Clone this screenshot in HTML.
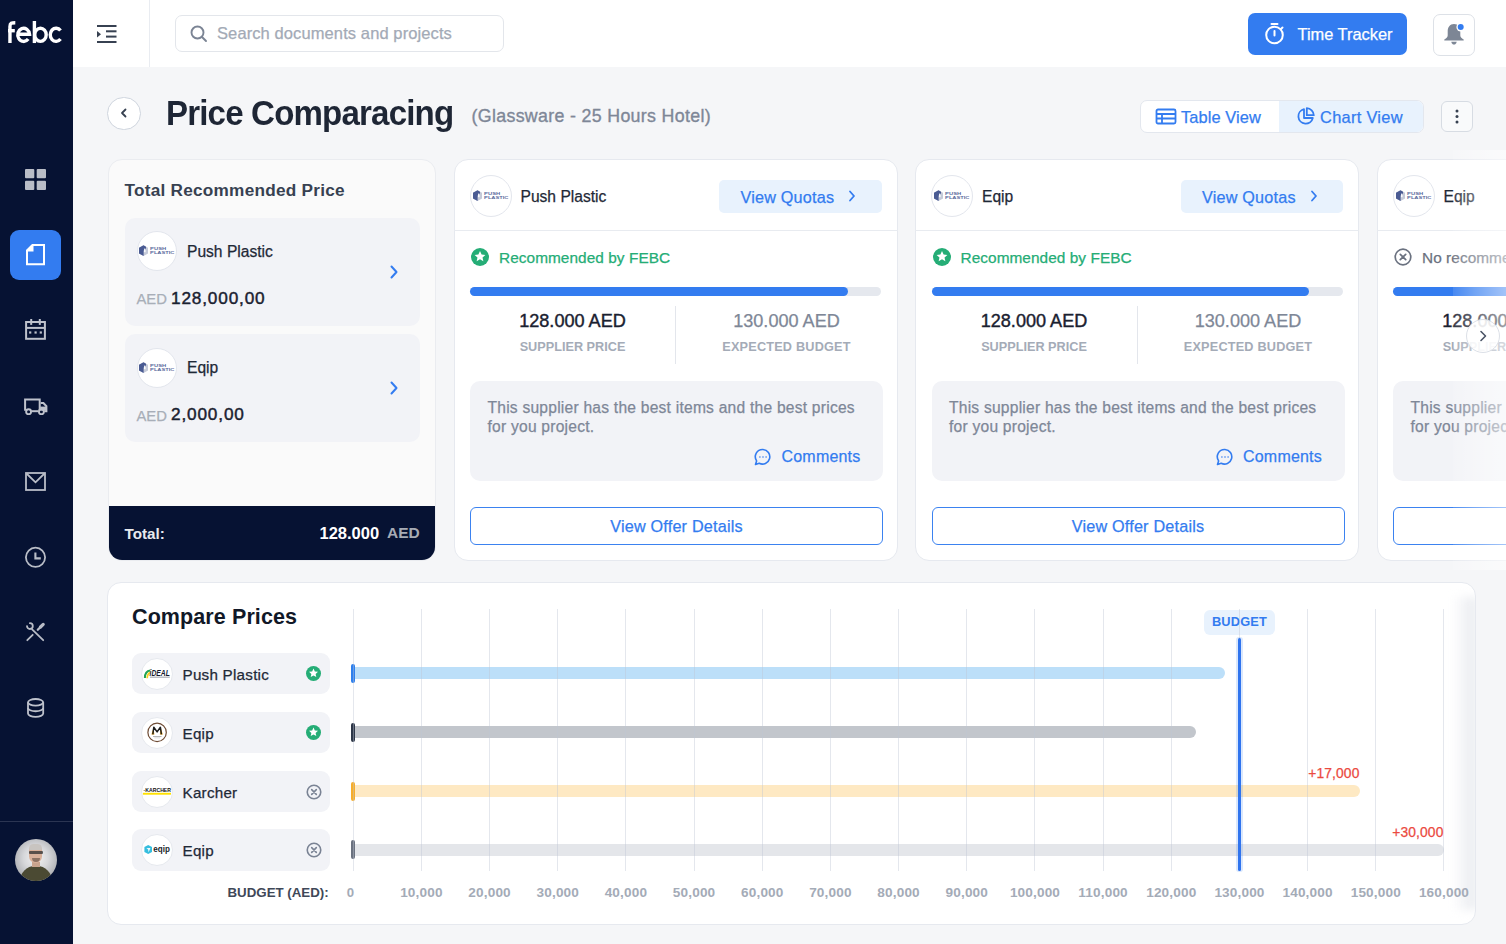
<!DOCTYPE html>
<html><head><meta charset="utf-8">
<style>
*{box-sizing:border-box;margin:0;padding:0}
html,body{width:1506px;height:944px;overflow:hidden;background:#F5F6F8;font-family:"Liberation Sans",sans-serif;color:#1F2937}
.abs{position:absolute}
#sidebar{position:absolute;left:0;top:0;width:73px;height:944px;background:#061233}
#header{position:absolute;left:73px;top:0;width:1433px;height:67px;background:#fff}
.t{position:absolute;white-space:nowrap;line-height:1;-webkit-text-stroke-width:0.25px}
.t[style*="bold"]{-webkit-text-stroke-width:0}
.card{position:absolute;top:158.5px;height:402px;border:1px solid #E6E9EF;border-radius:14px;background:#fff;overflow:hidden}
.logo{position:absolute;border-radius:50%;background:#fff;border:1px solid #E3E6ED;overflow:hidden}
.item{position:absolute;left:16px;width:295.5px;height:108px;border-radius:10px;background:#F2F3F7}

</style></head>
<body>
<!-- SIDEBAR -->
<div id="sidebar">
  <svg class="abs" id="logo" style="left:0;top:0" width="73" height="60" viewBox="0 0 73 60" fill="none" stroke="#fff" stroke-width="3.4"><path d="M9.95 43.05 V26.5 C9.95 23 11.6 22.7 15.3 22.7"/><path d="M8 30.7 H14.8"/><path d="M17.8 34.3 H29.55 A5.9 6.6 0 1 0 28.2 39.05"/><path d="M34.4 21 V43.05"/><ellipse cx="40.45" cy="34.8" rx="5.75" ry="6.6"/><path d="M60.5 30.55 A5.8 6.6 0 1 0 60.5 39.05"/></svg>
  <!-- grid -->
  <svg class="abs" style="left:25px;top:169px" width="21" height="21" viewBox="0 0 21 21"><g fill="#B9BDC7"><rect x="0" y="0" width="9.3" height="9.3" rx="1"/><rect x="11.7" y="0" width="9.3" height="9.3" rx="1"/><rect x="0" y="11.7" width="9.3" height="9.3" rx="1"/><rect x="11.7" y="11.7" width="9.3" height="9.3" rx="1"/></g></svg>
  <!-- active doc -->
  <div class="abs" style="left:10px;top:229.5px;width:51px;height:50.5px;border-radius:9px;background:#337CF0"></div>
  <svg class="abs" style="left:25px;top:243px" width="22" height="24" viewBox="0 0 22 24"><path d="M2 7.5 L7.5 2 H19 V21.3 H2 Z" fill="none" stroke="#fff" stroke-width="2"/><path d="M1.5 7 L7 1.5 H8.5 V8.5 H1.5 Z" fill="#fff"/></svg>
  <!-- calendar -->
  <svg class="abs" style="left:24px;top:318px" width="23" height="23" viewBox="0 0 23 23" fill="none" stroke="#BEC2CC" stroke-width="2"><rect x="2.1" y="4" width="18.8" height="16.8"/><line x1="2.1" y1="9.9" x2="20.9" y2="9.9"/><line x1="7.2" y1="1" x2="7.2" y2="6.9"/><line x1="15.8" y1="1" x2="15.8" y2="6.9"/><g fill="#BEC2CC" stroke="none"><rect x="5.1" y="13.4" width="2.2" height="2.2"/><rect x="10.5" y="13.4" width="2.2" height="2.2"/><rect x="15.7" y="13.4" width="2.2" height="2.2"/></g></svg>
  <!-- truck -->
  <svg class="abs" style="left:23px;top:397px" width="26" height="20" viewBox="0 0 26 20" fill="none" stroke="#BEC2CC" stroke-width="2"><path d="M2.1 13.8 V2.5 H16.7 V13"/><path d="M8.2 14.2 H15.6"/><path d="M17.7 6 H20.4 L23.4 9.2 V14.2 H21.2"/><path d="M17.2 9.6 H23.6 V13.6 H17.2 Z" fill="#BEC2CC" stroke="none"/><circle cx="5.6" cy="14.7" r="2.45" stroke-width="1.9"/><circle cx="18.4" cy="14.7" r="2.45" stroke-width="1.9"/></svg>
  <!-- mail -->
  <svg class="abs" style="left:24px;top:471px" width="23" height="21" viewBox="0 0 23 21" fill="none" stroke="#B9BDC7" stroke-width="1.8"><rect x="2" y="2" width="19" height="17"/><path d="M2.5 2.5 L11.5 11.3 L20.5 2.5"/></svg>
  <!-- clock -->
  <svg class="abs" style="left:24px;top:545.5px" width="23" height="23" viewBox="0 0 23 23" fill="none" stroke="#B9BDC7" stroke-width="1.8"><circle cx="11.5" cy="11.3" r="9.6"/><path d="M11.4 6.4 V12.4 H16.8" stroke-width="2.1"/></svg>
  <!-- tools -->
  <svg class="abs" style="left:20px;top:617px" width="30" height="30" viewBox="0 0 30 30" fill="none" stroke="#B9BDC7" stroke-width="1.8" stroke-linecap="round"><path d="M9.9 6.2 A2.9 2.9 0 1 1 7.0 9.1"/><path d="M12.1 12.3 L23.2 23.2"/><path d="M12.7 17.8 L7.3 23.2"/><path d="M17.8 12.7 L20.5 10" stroke-width="2.3"/><path d="M20.5 10 L23.2 7.4" stroke-width="3.2"/></svg>
  <!-- db -->
  <svg class="abs" style="left:26px;top:697px" width="19" height="22" viewBox="0 0 19 22" fill="none" stroke="#BEC2CC" stroke-width="1.8"><ellipse cx="9.6" cy="5.3" rx="7.6" ry="3.3"/><path d="M2 5.3 V16.6 A7.6 3.3 0 0 0 17.2 16.6 V5.3"/><path d="M2 10.95 A7.6 3.3 0 0 0 17.2 10.95"/></svg>
  <div class="abs" style="left:0;top:821px;width:73px;height:1px;background:#2B3552"></div>
  <div class="abs" id="avatar" style="left:14.5px;top:839px;width:42px;height:42px;border-radius:50%;overflow:hidden;background:radial-gradient(circle at 50% 45%,#F4F4F4 0,#D6D7DA 40%,#8E9196 100%)">
    <div class="abs" style="left:5px;top:27px;width:32px;height:20px;border-radius:15px 15px 0 0;background:#4B4A33"></div>
    <div class="abs" style="left:17px;top:23px;width:8px;height:5px;background:#C9A48E"></div>
    <div class="abs" style="left:14.5px;top:6px;width:13px;height:18px;border-radius:6px 6px 7px 7px;background:#D8B09A"></div>
    <div class="abs" style="left:14.5px;top:5px;width:13px;height:6px;border-radius:6px 6px 2px 2px;background:#C8C4C0"></div>
    <div class="abs" style="left:14px;top:12px;width:14px;height:3px;border-radius:1px;background:#2F2F2F;opacity:.75"></div>
    <div class="abs" style="left:17px;top:19px;width:8px;height:4px;border-radius:0 0 4px 4px;background:#5A4A40;opacity:.6"></div>
  </div>
</div>

<!-- HEADER -->
<div id="header">
  <svg class="abs" style="left:24px;top:25px" width="20" height="18" viewBox="0 0 20 18"><g fill="#374151"><rect x="0" y="0" width="19.5" height="2"/><rect x="9" y="5.3" width="10.5" height="2"/><rect x="9" y="10.6" width="10.5" height="2"/><rect x="0" y="16" width="19.5" height="2"/><path d="M0 5.9 L4 9.2 L0 12.5 Z"/></g></svg>
  <div class="abs" style="left:76px;top:0;width:1px;height:67px;background:#E9ECF1"></div>
  <div class="abs" style="left:102px;top:15px;width:329px;height:37px;border:1px solid #E3E6EB;border-radius:7px;background:#fff"></div>
  <svg class="abs" style="left:116.7px;top:25px" width="18" height="18" viewBox="0 0 18 18" fill="none" stroke="#7B8494" stroke-width="1.9" stroke-linecap="round"><circle cx="7.5" cy="7.5" r="6"/><path d="M12 12 L16 16"/></svg>
  <div class="t" style="left:144px;top:24.5px;font-size:16.5px;color:#A3AAB6;letter-spacing:0.1px">Search documents and projects</div>
  <div class="abs" style="left:1175px;top:13.2px;width:159px;height:42px;border-radius:7px;background:#337CF0"></div>
  <svg class="abs" style="left:1191px;top:22px" width="22" height="23" viewBox="0 0 22 23" fill="none" stroke="#fff" stroke-width="2" stroke-linecap="round"><circle cx="10.5" cy="13" r="8.3"/><path d="M10.5 9 V13.5"/><path d="M7.5 2 H13.5"/><path d="M18.5 5.5 L17 7"/></svg>
  <div class="t" style="left:1224.5px;top:26px;font-size:16.4px;color:#fff">Time Tracker</div>
  <div class="abs" style="left:1360px;top:13.5px;width:42px;height:42px;border:1px solid #DDE1E7;border-radius:7px;background:#fff"></div>
  <svg class="abs" style="left:1370px;top:22px" width="22" height="24" viewBox="0 0 22 24"><path fill="#7D8695" d="M11 2 C6.8 2 4.7 5.3 4.7 9.3 V13.3 C4.7 14.9 3.7 16.1 1.3 17.5 V18.4 H20.7 V17.5 C18.3 16.1 17.3 14.9 17.3 13.3 V9.3 C17.3 5.3 15.2 2 11 2 Z"/><path fill="#7D8695" d="M8.3 19.7 H13.7 C13.4 21.5 12.4 22.6 11 22.6 C9.6 22.6 8.6 21.5 8.3 19.7 Z"/><circle cx="17.7" cy="5.1" r="4.3" fill="#fff"/><circle cx="17.7" cy="5.1" r="3" fill="#337CF0"/></svg>
</div>

<!-- TITLE ROW -->
<div class="abs" style="left:107px;top:96.5px;width:33.5px;height:33.5px;border:1px solid #CFD5DE;border-radius:50%;background:#fff"></div>
<svg class="abs" style="left:117px;top:106px" width="14" height="14" viewBox="0 0 14 14" fill="none" stroke="#374151" stroke-width="1.8" stroke-linecap="round" stroke-linejoin="round"><path d="M8.5 3.5 L5 7 L8.5 10.5"/></svg>
<div class="t" style="left:166px;top:95.8px;font-size:35.5px;font-weight:bold;color:#1E2635;letter-spacing:-0.9px;transform:scaleX(0.932);transform-origin:0 0">Price Comparacing</div>
<div class="t" style="left:471.5px;top:107.9px;font-size:17.8px;color:#7E8797;letter-spacing:0.33px;-webkit-text-stroke:0.35px #7E8797">(Glassware - 25 Hours Hotel)</div>
<!-- toggle -->
<div class="abs" style="left:1139.5px;top:100px;width:284px;height:32.5px;border:1px solid #E3E7EE;border-radius:7px;background:#fff;overflow:hidden">
  <div class="abs" style="left:138px;top:0;width:146px;height:32px;background:#E8F2FD"></div>
</div>
<svg class="abs" style="left:1155px;top:108px" width="22" height="17" viewBox="0 0 22 17" fill="none" stroke="#337CF0" stroke-width="1.8"><rect x="1.5" y="1.5" width="19" height="14" rx="1.5"/><path d="M1.5 6 H20.5 M1.5 10.5 H20.5 M7 6 V15.5"/></svg>
<div class="t" style="left:1181px;top:108.5px;font-size:16.4px;color:#337CF0;letter-spacing:0.1px">Table View</div>
<svg class="abs" style="left:1296px;top:107px" width="19" height="19" viewBox="0 0 19 19" fill="none" stroke="#337CF0" stroke-width="1.8" stroke-linejoin="round"><path d="M8 2.2 A7.3 7.3 0 1 0 16.8 11 H8 Z"/><path d="M10.8 1.2 A7.3 7.3 0 0 1 17.8 8.2 H10.8 Z"/></svg>
<div class="t" style="left:1320px;top:108.5px;font-size:16.4px;color:#337CF0;letter-spacing:0.3px">Chart View</div>
<div class="abs" style="left:1441px;top:101px;width:31.5px;height:31px;border:1px solid #D7DCE3;border-radius:6px;background:#F9FAFB"></div>
<svg class="abs" style="left:1454px;top:108px" width="6" height="17" viewBox="0 0 6 17" fill="#374151"><circle cx="3" cy="3" r="1.5"/><circle cx="3" cy="8.5" r="1.5"/><circle cx="3" cy="14" r="1.5"/></svg>

<!-- CARD 1 -->
<div class="card" style="left:107.5px;width:328px;background:#FAFAFA;border-color:#EAECF0">
  <div class="t" style="left:16px;top:22px;font-size:17.2px;font-weight:bold;color:#374151;letter-spacing:0.25px">Total Recommended Price</div>
  <div class="item" style="top:58px"></div>
  <div class="item" style="top:174.5px"></div>
  <div class="abs" style="left:0;top:346.5px;width:328px;height:56px;background:#061233"></div>
  <div class="t" style="left:16px;top:366px;font-size:15.2px;font-weight:bold;color:#E8EAEE">Total:</div>
  <div class="t" style="left:211px;top:365px;font-size:16.5px;font-weight:bold;color:#fff">128.000</div>
  <div class="t" style="left:278.5px;top:365.5px;font-size:15.5px;font-weight:bold;color:#A6ABB5">AED</div>
</div>
<div class="logo" style="left:137.0px;top:231.0px;width:40px;height:40px"></div><svg class="abs" style="left:137.0px;top:243.0px" width="40" height="16" viewBox="0 0 40 16"><path d="M6.5 2.3 L11 4.8 V10.5 L6.5 13 L2 10.5 V4.8 Z" fill="#C5CAD8"/><path d="M2 4.8 L6.5 2.3 L9 3.7 V6.2 L6.6 7.4 V12.9 L2 10.5 Z" fill="#4A5B93"/><rect x="7.1" y="5.6" width="1.4" height="3.6" fill="#fff"/><text x="13.1" y="6.7" font-family="Liberation Sans" font-size="3.4" font-weight="bold" fill="#5A6A9C" textLength="16.1" lengthAdjust="spacingAndGlyphs">PUSH</text><text x="13.1" y="11.2" font-family="Liberation Sans" font-size="4.4" font-weight="bold" fill="#5A6A9C" textLength="24.4" lengthAdjust="spacingAndGlyphs">PLASTIC</text></svg><div class="t" style="left:187px;top:243.5px;font-size:15.6px;color:#1F2937">Push Plastic</div><svg class="abs" style="left:388px;top:264.5px" width="12" height="14" viewBox="0 0 12 14" fill="none" stroke="#337CF0" stroke-width="2" stroke-linecap="round" stroke-linejoin="round"><path d="M3.5 1.5 L8.5 7 L3.5 12.5"/></svg><div class="t" style="left:136.5px;top:292.2px;font-size:14.8px;color:#A8AEB8;-webkit-text-stroke:0.25px #A8AEB8">AED</div><div class="t" style="left:171px;top:289.9px;font-size:17.2px;color:#1A2130;letter-spacing:0.85px;-webkit-text-stroke:0.45px #1A2130">128,000,00</div><div class="logo" style="left:137.0px;top:347.5px;width:40px;height:40px"></div><svg class="abs" style="left:137.0px;top:359.5px" width="40" height="16" viewBox="0 0 40 16"><path d="M6.5 2.3 L11 4.8 V10.5 L6.5 13 L2 10.5 V4.8 Z" fill="#C5CAD8"/><path d="M2 4.8 L6.5 2.3 L9 3.7 V6.2 L6.6 7.4 V12.9 L2 10.5 Z" fill="#4A5B93"/><rect x="7.1" y="5.6" width="1.4" height="3.6" fill="#fff"/><text x="13.1" y="6.7" font-family="Liberation Sans" font-size="3.4" font-weight="bold" fill="#5A6A9C" textLength="16.1" lengthAdjust="spacingAndGlyphs">PUSH</text><text x="13.1" y="11.2" font-family="Liberation Sans" font-size="4.4" font-weight="bold" fill="#5A6A9C" textLength="24.4" lengthAdjust="spacingAndGlyphs">PLASTIC</text></svg><div class="t" style="left:187px;top:360.0px;font-size:15.6px;color:#1F2937">Eqip</div><svg class="abs" style="left:388px;top:381.0px" width="12" height="14" viewBox="0 0 12 14" fill="none" stroke="#337CF0" stroke-width="2" stroke-linecap="round" stroke-linejoin="round"><path d="M3.5 1.5 L8.5 7 L3.5 12.5"/></svg><div class="t" style="left:136.5px;top:408.7px;font-size:14.8px;color:#A8AEB8;-webkit-text-stroke:0.25px #A8AEB8">AED</div><div class="t" style="left:171px;top:406.4px;font-size:17.2px;color:#1A2130;letter-spacing:0.85px;-webkit-text-stroke:0.45px #1A2130">2,000,00</div><!-- COMPARE -->
<div class="abs" style="left:107px;top:582px;width:1368.5px;height:343px;border:1px solid #E6E9EF;border-radius:14px;background:#fff;overflow:hidden"><div class="abs" style="right:-4px;top:14px;width:26px;bottom:14px;background:linear-gradient(90deg,rgba(234,236,240,0),rgba(234,236,240,1) 75%,rgba(245,246,248,1));filter:blur(5px)"></div></div><div class="t" style="left:132px;top:607px;font-size:21.5px;font-weight:bold;color:#111827;letter-spacing:0.1px">Compare Prices</div><div class="abs" style="left:352.75px;top:609px;width:1px;height:261.5px;background:rgba(190,197,212,.42);z-index:1"></div><div class="abs" style="left:420.92px;top:609px;width:1px;height:261.5px;background:rgba(190,197,212,.42);z-index:1"></div><div class="abs" style="left:489.09px;top:609px;width:1px;height:261.5px;background:rgba(190,197,212,.42);z-index:1"></div><div class="abs" style="left:557.26px;top:609px;width:1px;height:261.5px;background:rgba(190,197,212,.42);z-index:1"></div><div class="abs" style="left:625.43px;top:609px;width:1px;height:261.5px;background:rgba(190,197,212,.42);z-index:1"></div><div class="abs" style="left:693.60px;top:609px;width:1px;height:261.5px;background:rgba(190,197,212,.42);z-index:1"></div><div class="abs" style="left:761.77px;top:609px;width:1px;height:261.5px;background:rgba(190,197,212,.42);z-index:1"></div><div class="abs" style="left:829.94px;top:609px;width:1px;height:261.5px;background:rgba(190,197,212,.42);z-index:1"></div><div class="abs" style="left:898.11px;top:609px;width:1px;height:261.5px;background:rgba(190,197,212,.42);z-index:1"></div><div class="abs" style="left:966.28px;top:609px;width:1px;height:261.5px;background:rgba(190,197,212,.42);z-index:1"></div><div class="abs" style="left:1034.45px;top:609px;width:1px;height:261.5px;background:rgba(190,197,212,.42);z-index:1"></div><div class="abs" style="left:1102.62px;top:609px;width:1px;height:261.5px;background:rgba(190,197,212,.42);z-index:1"></div><div class="abs" style="left:1170.79px;top:609px;width:1px;height:261.5px;background:rgba(190,197,212,.42);z-index:1"></div><div class="abs" style="left:1238.96px;top:609px;width:1px;height:261.5px;background:rgba(190,197,212,.42);z-index:1"></div><div class="abs" style="left:1307.13px;top:609px;width:1px;height:261.5px;background:rgba(190,197,212,.42);z-index:1"></div><div class="abs" style="left:1375.30px;top:609px;width:1px;height:261.5px;background:rgba(190,197,212,.42);z-index:1"></div><div class="abs" style="left:1443.47px;top:609px;width:1px;height:261.5px;background:rgba(190,197,212,.42);z-index:1"></div><div class="t" style="left:346.8px;top:886px;font-size:13.2px;font-weight:bold;color:#A4ABB7">0</div><div class="t" style="left:386.4px;top:886px;width:70px;text-align:center;font-size:13.6px;font-weight:bold;color:#A4ABB7;letter-spacing:0.15px">10,000</div><div class="t" style="left:454.6px;top:886px;width:70px;text-align:center;font-size:13.6px;font-weight:bold;color:#A4ABB7;letter-spacing:0.15px">20,000</div><div class="t" style="left:522.8px;top:886px;width:70px;text-align:center;font-size:13.6px;font-weight:bold;color:#A4ABB7;letter-spacing:0.15px">30,000</div><div class="t" style="left:590.9px;top:886px;width:70px;text-align:center;font-size:13.6px;font-weight:bold;color:#A4ABB7;letter-spacing:0.15px">40,000</div><div class="t" style="left:659.1px;top:886px;width:70px;text-align:center;font-size:13.6px;font-weight:bold;color:#A4ABB7;letter-spacing:0.15px">50,000</div><div class="t" style="left:727.3px;top:886px;width:70px;text-align:center;font-size:13.6px;font-weight:bold;color:#A4ABB7;letter-spacing:0.15px">60,000</div><div class="t" style="left:795.4px;top:886px;width:70px;text-align:center;font-size:13.6px;font-weight:bold;color:#A4ABB7;letter-spacing:0.15px">70,000</div><div class="t" style="left:863.6px;top:886px;width:70px;text-align:center;font-size:13.6px;font-weight:bold;color:#A4ABB7;letter-spacing:0.15px">80,000</div><div class="t" style="left:931.8px;top:886px;width:70px;text-align:center;font-size:13.6px;font-weight:bold;color:#A4ABB7;letter-spacing:0.15px">90,000</div><div class="t" style="left:1000.0px;top:886px;width:70px;text-align:center;font-size:13.6px;font-weight:bold;color:#A4ABB7;letter-spacing:0.15px">100,000</div><div class="t" style="left:1068.1px;top:886px;width:70px;text-align:center;font-size:13.6px;font-weight:bold;color:#A4ABB7;letter-spacing:0.15px">110,000</div><div class="t" style="left:1136.3px;top:886px;width:70px;text-align:center;font-size:13.6px;font-weight:bold;color:#A4ABB7;letter-spacing:0.15px">120,000</div><div class="t" style="left:1204.5px;top:886px;width:70px;text-align:center;font-size:13.6px;font-weight:bold;color:#A4ABB7;letter-spacing:0.15px">130,000</div><div class="t" style="left:1272.6px;top:886px;width:70px;text-align:center;font-size:13.6px;font-weight:bold;color:#A4ABB7;letter-spacing:0.15px">140,000</div><div class="t" style="left:1340.8px;top:886px;width:70px;text-align:center;font-size:13.6px;font-weight:bold;color:#A4ABB7;letter-spacing:0.15px">150,000</div><div class="t" style="left:1409.0px;top:886px;width:70px;text-align:center;font-size:13.6px;font-weight:bold;color:#A4ABB7;letter-spacing:0.15px">160,000</div><div class="t" style="left:227.5px;top:886px;font-size:13.3px;font-weight:bold;color:#3F4858;letter-spacing:0px">BUDGET (AED):</div><div class="abs" style="left:132px;top:652.5px;width:198px;height:41.5px;border-radius:9px;background:#F2F3F7"></div><div class="logo" style="left:141px;top:657.5px;width:32px;height:32px;border-color:#E6E9EE"></div><div class="t" style="left:182.5px;top:666.7px;font-size:15.2px;color:#1F2937;letter-spacing:0.25px">Push Plastic</div><svg class="abs" style="left:306px;top:666.0px" width="15" height="15" viewBox="0 0 18 18"><circle cx="9" cy="9" r="9" fill="#25AD76"/><path fill="#fff" d="M9 3.04 L10.6 6.6 L14.39 6.95 L11.53 9.48 L12.36 13.27 L9 11.29 L5.64 13.27 L6.47 9.48 L3.61 6.95 L7.4 6.6 Z"/></svg><div class="abs" style="left:353px;top:667.2px;width:872.0px;height:12px;border-radius:0 6px 6px 0;background:#BCDFF9"></div><div class="abs" style="left:351px;top:663.8px;width:3.5px;height:19px;border-radius:2px;background:#2F80ED"></div><div class="abs" style="left:132px;top:711.5px;width:198px;height:41.5px;border-radius:9px;background:#F2F3F7"></div><div class="logo" style="left:141px;top:716.5px;width:32px;height:32px;border-color:#E6E9EE"></div><div class="t" style="left:182.5px;top:725.7px;font-size:15.2px;color:#1F2937;letter-spacing:0.25px">Eqip</div><svg class="abs" style="left:306px;top:725.0px" width="15" height="15" viewBox="0 0 18 18"><circle cx="9" cy="9" r="9" fill="#25AD76"/><path fill="#fff" d="M9 3.04 L10.6 6.6 L14.39 6.95 L11.53 9.48 L12.36 13.27 L9 11.29 L5.64 13.27 L6.47 9.48 L3.61 6.95 L7.4 6.6 Z"/></svg><div class="abs" style="left:353px;top:726.2px;width:843.0px;height:12px;border-radius:0 6px 6px 0;background:#C2C6CC"></div><div class="abs" style="left:351px;top:722.8px;width:3.5px;height:19px;border-radius:2px;background:#2D3748"></div><div class="abs" style="left:132px;top:770.5px;width:198px;height:41.5px;border-radius:9px;background:#F2F3F7"></div><div class="logo" style="left:141px;top:775.5px;width:32px;height:32px;border-color:#E6E9EE"></div><div class="t" style="left:182.5px;top:784.7px;font-size:15.2px;color:#1F2937;letter-spacing:0.25px">Karcher</div><svg class="abs" style="left:305.5px;top:783.5px" width="16" height="16" viewBox="0 0 18 18" fill="none" stroke="#7A8394" stroke-width="1.8" stroke-linecap="round"><circle cx="9" cy="9" r="7.6"/><path d="M6.4 6.4 L11.6 11.6 M11.6 6.4 L6.4 11.6"/></svg><div class="abs" style="left:353px;top:785.2px;width:1006.5px;height:12px;border-radius:0 6px 6px 0;background:#FEE9C3"></div><div class="abs" style="left:351px;top:781.8px;width:3.5px;height:19px;border-radius:2px;background:#F6AE2D"></div><div class="abs" style="left:132px;top:829.0px;width:198px;height:41.5px;border-radius:9px;background:#F2F3F7"></div><div class="logo" style="left:141px;top:834.0px;width:32px;height:32px;border-color:#E6E9EE"></div><div class="t" style="left:182.5px;top:843.2px;font-size:15.2px;color:#1F2937;letter-spacing:0.25px">Eqip</div><svg class="abs" style="left:305.5px;top:842.0px" width="16" height="16" viewBox="0 0 18 18" fill="none" stroke="#7A8394" stroke-width="1.8" stroke-linecap="round"><circle cx="9" cy="9" r="7.6"/><path d="M6.4 6.4 L11.6 11.6 M11.6 6.4 L6.4 11.6"/></svg><div class="abs" style="left:353px;top:843.8px;width:1090.5px;height:12px;border-radius:0 6px 6px 0;background:#E4E6EA"></div><div class="abs" style="left:351px;top:840.2px;width:3.5px;height:19px;border-radius:2px;background:#6B7280"></div><svg class="abs" style="left:141px;top:657.5px" width="32" height="32" viewBox="0 0 32 32"><path d="M3.9 20 C3.9 15.5 6 13 9.3 12.6" fill="none" stroke="#23A455" stroke-width="2"/><path d="M6.2 20.2 C6.3 17 7.5 15.2 9.3 14.6" fill="none" stroke="#F7D21E" stroke-width="1.7"/><text x="8.6" y="17.9" font-family="Liberation Sans" font-size="8.4" font-weight="bold" font-style="italic" fill="#141B2D" textLength="20.3" lengthAdjust="spacingAndGlyphs">iDEAL</text><rect x="9" y="18.6" width="19.8" height="1.2" fill="#8C929C" opacity=".7"/></svg>
<svg class="abs" style="left:141px;top:716.5px" width="32" height="32" viewBox="0 0 32 32"><circle cx="16.1" cy="15.4" r="9.2" fill="none" stroke="#6E4B34" stroke-width="1.2"/><path d="M10.4 17.6 L12.4 10.9 L13.4 17.6 Z M21.8 17.6 L19.8 10.9 L18.8 17.6 Z" fill="#F5A70F"/><path d="M11.8 17.4 L12.8 10.3 L16.1 14.9 L19.4 10.3 L20.4 17.4" fill="none" stroke="#1E1E1E" stroke-width="1.5" stroke-linejoin="round"/><rect x="12" y="19" width="8.5" height="0.9" fill="#8F8F8F" opacity=".7"/><rect x="13.3" y="20.6" width="5.8" height="0.6" fill="#B0B0B0" opacity=".7"/></svg>
<svg class="abs" style="left:141px;top:775.5px" width="32" height="32" viewBox="0 0 32 32"><text x="2.6" y="16.3" font-family="Liberation Sans" font-size="5.9" font-weight="bold" fill="#111" textLength="27.4" lengthAdjust="spacingAndGlyphs">&#183;KARCHER</text><rect x="1.9" y="16.8" width="28.1" height="1.9" fill="#FFE100"/></svg>
<svg class="abs" style="left:141px;top:834px" width="32" height="32" viewBox="0 0 32 32"><path d="M7.2 11.1 L11 13.1 V18 L7.2 20 L3.4 18 V13.1 Z" fill="#36BEDF"/><path d="M5.3 14.3 L9.4 14 L7.6 18.3 L7.2 15.6 Z" fill="#fff"/><text x="12.3" y="17.9" font-family="Liberation Sans" font-size="8.8" font-weight="bold" fill="#1A1E28" textLength="16.6" lengthAdjust="spacingAndGlyphs">eqip</text></svg><div class="abs" style="left:1235.5px;top:636.5px;width:7px;height:235px;border-radius:3px;background:rgba(51,124,240,.18);z-index:1"></div><div class="abs" style="left:1237.5px;top:637.5px;width:3.3px;height:233px;border-radius:2px;background:#2F74EE;z-index:1"></div><div class="abs" style="left:1204px;top:609.5px;width:71px;height:25px;border-radius:6px;background:#E8F2FD"></div><div class="t" style="left:1204px;top:616px;width:71px;text-align:center;font-size:12.8px;font-weight:bold;color:#337CF0;letter-spacing:0.2px">BUDGET</div><div class="t" style="left:1290px;top:766.5px;width:69.5px;text-align:right;font-size:13.8px;color:#EB4A3F;letter-spacing:0.15px">+17,000</div><div class="t" style="left:1374px;top:825.5px;width:69.5px;text-align:right;font-size:13.8px;color:#EB4A3F;letter-spacing:0.15px">+30,000</div>
<!-- CARDS 2-4 --><div class="card" style="left:453.5px;width:444px"></div><div class="abs" style="left:453.5px;top:230px;width:444px;height:1px;background:#E8EBF0"></div><div class="logo" style="left:469.5px;top:175.0px;width:42px;height:42px"></div><svg class="abs" style="left:470.5px;top:188.0px" width="40" height="16" viewBox="0 0 40 16"><path d="M6.5 2.3 L11 4.8 V10.5 L6.5 13 L2 10.5 V4.8 Z" fill="#C5CAD8"/><path d="M2 4.8 L6.5 2.3 L9 3.7 V6.2 L6.6 7.4 V12.9 L2 10.5 Z" fill="#4A5B93"/><rect x="7.1" y="5.6" width="1.4" height="3.6" fill="#fff"/><text x="13.1" y="6.7" font-family="Liberation Sans" font-size="3.4" font-weight="bold" fill="#5A6A9C" textLength="16.1" lengthAdjust="spacingAndGlyphs">PUSH</text><text x="13.1" y="11.2" font-family="Liberation Sans" font-size="4.4" font-weight="bold" fill="#5A6A9C" textLength="24.4" lengthAdjust="spacingAndGlyphs">PLASTIC</text></svg><div class="t" style="left:520.5px;top:189px;font-size:15.6px;color:#1F2937">Push Plastic</div><div class="abs" style="left:719.0px;top:179.5px;width:162.5px;height:33px;border-radius:5px;background:#E8F2FD"></div><div class="t" style="left:740.5px;top:188.5px;font-size:16.2px;color:#337CF0;letter-spacing:0.2px">View Quotas</div><svg class="abs" style="left:847.0px;top:189px" width="10" height="14" viewBox="0 0 10 14" fill="none" stroke="#337CF0" stroke-width="1.8" stroke-linecap="round" stroke-linejoin="round"><path d="M3 2.5 L7 7 L3 11.5"/></svg><svg class="abs" style="left:471.0px;top:248px" width="18" height="18" viewBox="0 0 18 18"><circle cx="9" cy="9" r="9" fill="#25AD76"/><path fill="#fff" d="M9 3.04 L10.6 6.6 L14.39 6.95 L11.53 9.48 L12.36 13.27 L9 11.29 L5.64 13.27 L6.47 9.48 L3.61 6.95 L7.4 6.6 Z"/></svg><div class="t" style="left:499.0px;top:250px;font-size:15.4px;color:#25AD76;letter-spacing:0.05px">Recommended by FEBC</div><div class="abs" style="left:470.0px;top:287px;width:411px;height:9px;border-radius:5px;background:#E5E8EE"></div><div class="abs" style="left:470.0px;top:287px;width:377.5px;height:9px;border-radius:5px;background:#337CF0"></div><div class="t" style="left:465.5px;top:312px;font-size:18.1px;color:#1A2130;width:214px;text-align:center;-webkit-text-stroke:0.4px #1A2130">128.000 AED</div><div class="t" style="left:465.5px;top:341px;font-size:12.7px;font-weight:bold;color:#A4ABB7;width:214px;text-align:center;letter-spacing:0px">SUPPLIER PRICE</div><div class="abs" style="left:675.0px;top:305.5px;width:1px;height:58.5px;background:#E3E6EC"></div><div class="t" style="left:679.5px;top:312px;font-size:18.1px;color:#7E8797;width:214px;text-align:center;-webkit-text-stroke:0.25px #7E8797">130.000 AED</div><div class="t" style="left:679.5px;top:341px;font-size:12.7px;font-weight:bold;color:#A4ABB7;width:214px;text-align:center;letter-spacing:0.2px">EXPECTED BUDGET</div><div class="abs" style="left:470.0px;top:381px;width:413px;height:100px;border-radius:10px;background:#F2F3F7"></div><div class="t" style="left:487.5px;top:397.5px;font-size:15.6px;line-height:19px;color:#7E8797;letter-spacing:0.23px;white-space:normal;width:390px">This supplier has the best items and the best prices<br>for you project.</div><svg class="abs" style="left:754.3px;top:447.5px" width="18" height="18" viewBox="0 0 18 18" fill="none" stroke="#337CF0" stroke-width="1.6" stroke-linejoin="round"><path d="M9 1.5 A7.3 7.3 0 1 1 5.2 15.3 L1.5 16.5 L2.6 12.9 A7.3 7.3 0 0 1 9 1.5 Z"/><g fill="#337CF0" stroke="none"><circle cx="5.9" cy="9" r="0.8"/><circle cx="9" cy="9" r="0.8"/><circle cx="12.1" cy="9" r="0.8"/></g></svg><div class="t" style="left:781.5px;top:449px;font-size:16px;color:#337CF0;letter-spacing:0.2px">Comments</div><div class="abs" style="left:470.0px;top:506.5px;width:413px;height:38px;border:1.3px solid #3B82F0;border-radius:6px;background:#fff"></div><div class="t" style="left:470.0px;top:517.5px;font-size:16.2px;color:#337CF0;width:413px;text-align:center;letter-spacing:0.2px">View Offer Details</div><div class="card" style="left:915.0px;width:444px"></div><div class="abs" style="left:915.0px;top:230px;width:444px;height:1px;background:#E8EBF0"></div><div class="logo" style="left:931.0px;top:175.0px;width:42px;height:42px"></div><svg class="abs" style="left:932.0px;top:188.0px" width="40" height="16" viewBox="0 0 40 16"><path d="M6.5 2.3 L11 4.8 V10.5 L6.5 13 L2 10.5 V4.8 Z" fill="#C5CAD8"/><path d="M2 4.8 L6.5 2.3 L9 3.7 V6.2 L6.6 7.4 V12.9 L2 10.5 Z" fill="#4A5B93"/><rect x="7.1" y="5.6" width="1.4" height="3.6" fill="#fff"/><text x="13.1" y="6.7" font-family="Liberation Sans" font-size="3.4" font-weight="bold" fill="#5A6A9C" textLength="16.1" lengthAdjust="spacingAndGlyphs">PUSH</text><text x="13.1" y="11.2" font-family="Liberation Sans" font-size="4.4" font-weight="bold" fill="#5A6A9C" textLength="24.4" lengthAdjust="spacingAndGlyphs">PLASTIC</text></svg><div class="t" style="left:982.0px;top:189px;font-size:15.6px;color:#1F2937">Eqip</div><div class="abs" style="left:1180.5px;top:179.5px;width:162.5px;height:33px;border-radius:5px;background:#E8F2FD"></div><div class="t" style="left:1202.0px;top:188.5px;font-size:16.2px;color:#337CF0;letter-spacing:0.2px">View Quotas</div><svg class="abs" style="left:1308.5px;top:189px" width="10" height="14" viewBox="0 0 10 14" fill="none" stroke="#337CF0" stroke-width="1.8" stroke-linecap="round" stroke-linejoin="round"><path d="M3 2.5 L7 7 L3 11.5"/></svg><svg class="abs" style="left:932.5px;top:248px" width="18" height="18" viewBox="0 0 18 18"><circle cx="9" cy="9" r="9" fill="#25AD76"/><path fill="#fff" d="M9 3.04 L10.6 6.6 L14.39 6.95 L11.53 9.48 L12.36 13.27 L9 11.29 L5.64 13.27 L6.47 9.48 L3.61 6.95 L7.4 6.6 Z"/></svg><div class="t" style="left:960.5px;top:250px;font-size:15.4px;color:#25AD76;letter-spacing:0.05px">Recommended by FEBC</div><div class="abs" style="left:931.5px;top:287px;width:411px;height:9px;border-radius:5px;background:#E5E8EE"></div><div class="abs" style="left:931.5px;top:287px;width:377.5px;height:9px;border-radius:5px;background:#337CF0"></div><div class="t" style="left:927.0px;top:312px;font-size:18.1px;color:#1A2130;width:214px;text-align:center;-webkit-text-stroke:0.4px #1A2130">128.000 AED</div><div class="t" style="left:927.0px;top:341px;font-size:12.7px;font-weight:bold;color:#A4ABB7;width:214px;text-align:center;letter-spacing:0px">SUPPLIER PRICE</div><div class="abs" style="left:1136.5px;top:305.5px;width:1px;height:58.5px;background:#E3E6EC"></div><div class="t" style="left:1141.0px;top:312px;font-size:18.1px;color:#7E8797;width:214px;text-align:center;-webkit-text-stroke:0.25px #7E8797">130.000 AED</div><div class="t" style="left:1141.0px;top:341px;font-size:12.7px;font-weight:bold;color:#A4ABB7;width:214px;text-align:center;letter-spacing:0.2px">EXPECTED BUDGET</div><div class="abs" style="left:931.5px;top:381px;width:413px;height:100px;border-radius:10px;background:#F2F3F7"></div><div class="t" style="left:949.0px;top:397.5px;font-size:15.6px;line-height:19px;color:#7E8797;letter-spacing:0.23px;white-space:normal;width:390px">This supplier has the best items and the best prices<br>for you project.</div><svg class="abs" style="left:1215.8px;top:447.5px" width="18" height="18" viewBox="0 0 18 18" fill="none" stroke="#337CF0" stroke-width="1.6" stroke-linejoin="round"><path d="M9 1.5 A7.3 7.3 0 1 1 5.2 15.3 L1.5 16.5 L2.6 12.9 A7.3 7.3 0 0 1 9 1.5 Z"/><g fill="#337CF0" stroke="none"><circle cx="5.9" cy="9" r="0.8"/><circle cx="9" cy="9" r="0.8"/><circle cx="12.1" cy="9" r="0.8"/></g></svg><div class="t" style="left:1243.0px;top:449px;font-size:16px;color:#337CF0;letter-spacing:0.2px">Comments</div><div class="abs" style="left:931.5px;top:506.5px;width:413px;height:38px;border:1.3px solid #3B82F0;border-radius:6px;background:#fff"></div><div class="t" style="left:931.5px;top:517.5px;font-size:16.2px;color:#337CF0;width:413px;text-align:center;letter-spacing:0.2px">View Offer Details</div><div class="card" style="left:1376.5px;width:444px"></div><div class="abs" style="left:1376.5px;top:230px;width:444px;height:1px;background:#E8EBF0"></div><div class="logo" style="left:1392.5px;top:175.0px;width:42px;height:42px"></div><svg class="abs" style="left:1393.5px;top:188.0px" width="40" height="16" viewBox="0 0 40 16"><path d="M6.5 2.3 L11 4.8 V10.5 L6.5 13 L2 10.5 V4.8 Z" fill="#C5CAD8"/><path d="M2 4.8 L6.5 2.3 L9 3.7 V6.2 L6.6 7.4 V12.9 L2 10.5 Z" fill="#4A5B93"/><rect x="7.1" y="5.6" width="1.4" height="3.6" fill="#fff"/><text x="13.1" y="6.7" font-family="Liberation Sans" font-size="3.4" font-weight="bold" fill="#5A6A9C" textLength="16.1" lengthAdjust="spacingAndGlyphs">PUSH</text><text x="13.1" y="11.2" font-family="Liberation Sans" font-size="4.4" font-weight="bold" fill="#5A6A9C" textLength="24.4" lengthAdjust="spacingAndGlyphs">PLASTIC</text></svg><div class="t" style="left:1443.5px;top:189px;font-size:15.6px;color:#1F2937">Eqip</div><div class="abs" style="left:1642.0px;top:179.5px;width:162.5px;height:33px;border-radius:5px;background:#E8F2FD"></div><div class="t" style="left:1663.5px;top:188.5px;font-size:16.2px;color:#337CF0;letter-spacing:0.2px">View Quotas</div><svg class="abs" style="left:1770.0px;top:189px" width="10" height="14" viewBox="0 0 10 14" fill="none" stroke="#337CF0" stroke-width="1.8" stroke-linecap="round" stroke-linejoin="round"><path d="M3 2.5 L7 7 L3 11.5"/></svg><svg class="abs" style="left:1394.0px;top:248px" width="18" height="18" viewBox="0 0 18 18" fill="none" stroke="#6B7280" stroke-width="1.7" stroke-linecap="round"><circle cx="9" cy="9" r="7.8"/><path d="M6.3 6.3 L11.7 11.7 M11.7 6.3 L6.3 11.7"/></svg><div class="t" style="left:1422.0px;top:250px;font-size:15.4px;color:#6B7280;letter-spacing:0.05px">No recommendation</div><div class="abs" style="left:1393.0px;top:287px;width:411px;height:9px;border-radius:5px;background:#E5E8EE"></div><div class="abs" style="left:1393.0px;top:287px;width:377.5px;height:9px;border-radius:5px;background:#337CF0"></div><div class="t" style="left:1388.5px;top:312px;font-size:18.1px;color:#1A2130;width:214px;text-align:center;-webkit-text-stroke:0.4px #1A2130">128.000 AED</div><div class="t" style="left:1388.5px;top:341px;font-size:12.7px;font-weight:bold;color:#A4ABB7;width:214px;text-align:center;letter-spacing:0px">SUPPLIER PRICE</div><div class="abs" style="left:1598.0px;top:305.5px;width:1px;height:58.5px;background:#E3E6EC"></div><div class="t" style="left:1602.5px;top:312px;font-size:18.1px;color:#7E8797;width:214px;text-align:center;-webkit-text-stroke:0.25px #7E8797">130.000 AED</div><div class="t" style="left:1602.5px;top:341px;font-size:12.7px;font-weight:bold;color:#A4ABB7;width:214px;text-align:center;letter-spacing:0.2px">EXPECTED BUDGET</div><div class="abs" style="left:1393.0px;top:381px;width:413px;height:100px;border-radius:10px;background:#F2F3F7"></div><div class="t" style="left:1410.5px;top:397.5px;font-size:15.6px;line-height:19px;color:#7E8797;letter-spacing:0.23px;white-space:normal;width:390px">This supplier has the best items and the best prices<br>for you project.</div><svg class="abs" style="left:1677.3px;top:447.5px" width="18" height="18" viewBox="0 0 18 18" fill="none" stroke="#337CF0" stroke-width="1.6" stroke-linejoin="round"><path d="M9 1.5 A7.3 7.3 0 1 1 5.2 15.3 L1.5 16.5 L2.6 12.9 A7.3 7.3 0 0 1 9 1.5 Z"/><g fill="#337CF0" stroke="none"><circle cx="5.9" cy="9" r="0.8"/><circle cx="9" cy="9" r="0.8"/><circle cx="12.1" cy="9" r="0.8"/></g></svg><div class="t" style="left:1704.5px;top:449px;font-size:16px;color:#337CF0;letter-spacing:0.2px">Comments</div><div class="abs" style="left:1393.0px;top:506.5px;width:413px;height:38px;border:1.3px solid #3B82F0;border-radius:6px;background:#fff"></div><div class="t" style="left:1393.0px;top:517.5px;font-size:16.2px;color:#337CF0;width:413px;text-align:center;letter-spacing:0.2px">View Offer Details</div>
<div class="abs" style="left:1453px;top:150px;width:53px;height:420px;background:linear-gradient(90deg,rgba(255,255,255,.1) 0%,rgba(255,255,255,.3) 40%,rgba(255,255,255,.55) 100%)"></div>
<div class="abs" style="left:1466px;top:319px;width:34px;height:34px;border-radius:50%;border:1px solid #DCE0E7;background:rgba(255,255,255,.85)"></div>
<svg class="abs" style="left:1477px;top:329px" width="12" height="14" viewBox="0 0 12 14" fill="none" stroke="#4A5466" stroke-width="1.6" stroke-linecap="round" stroke-linejoin="round"><path d="M4 2.5 L8.5 7 L4 11.5"/></svg>
</body></html>
